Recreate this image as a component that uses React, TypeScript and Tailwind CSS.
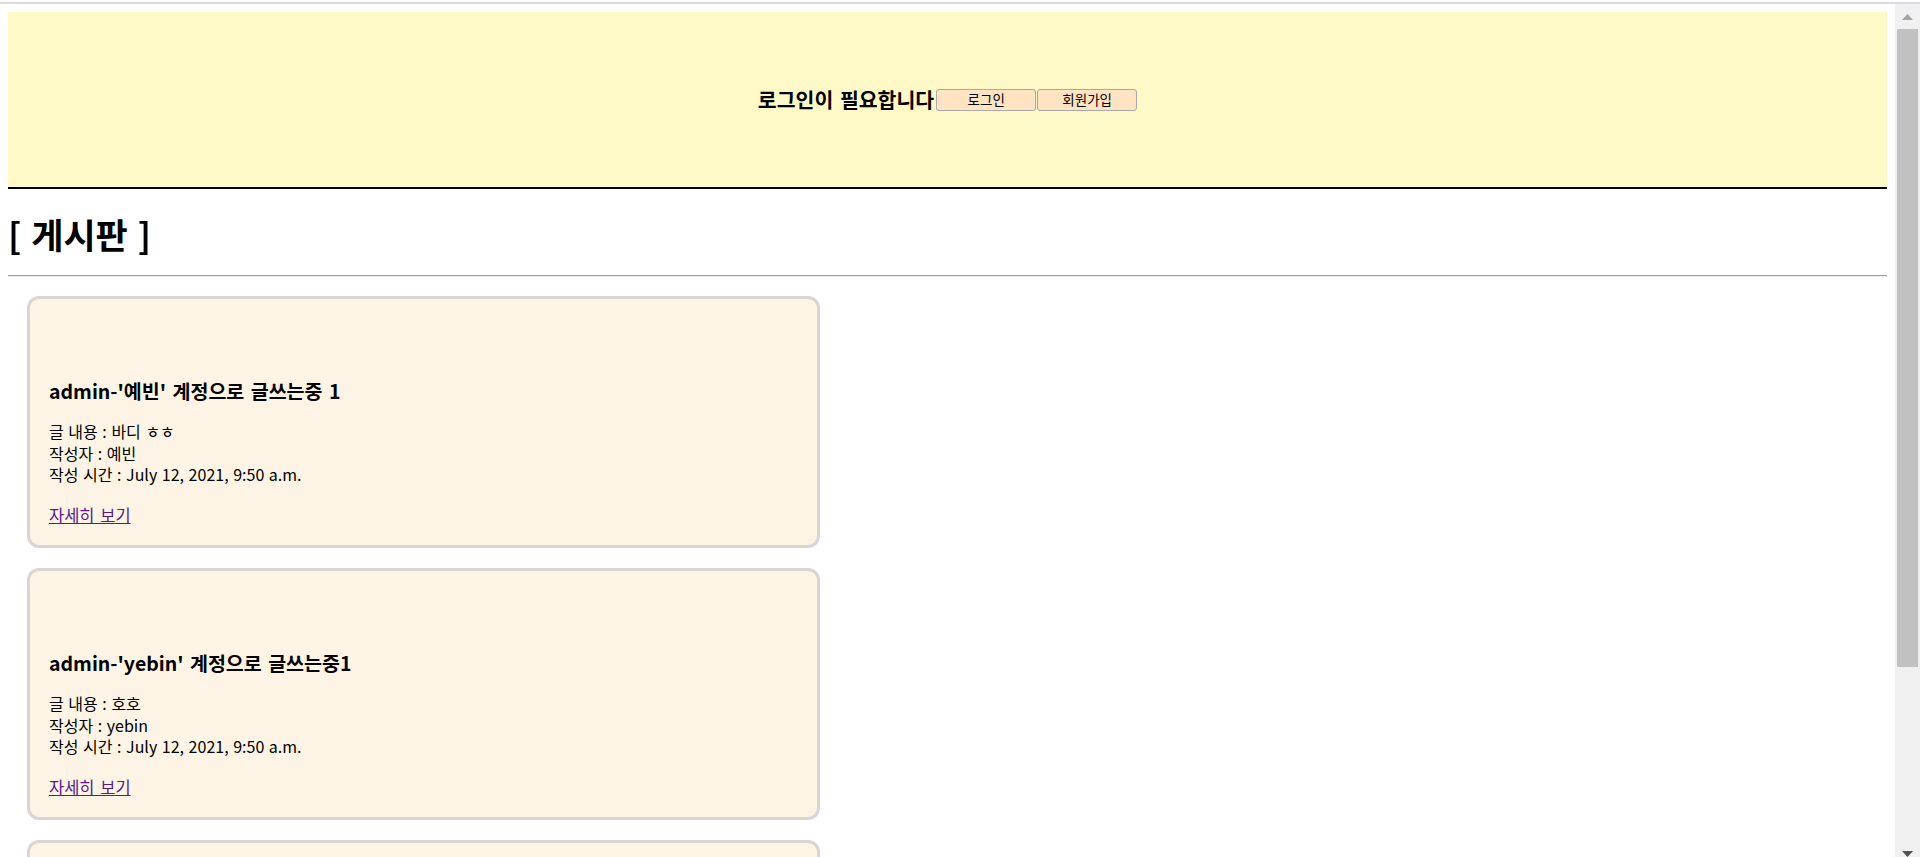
import React from 'react';

type Post = {
  title: string;
  body: string;
  author: string;
  createdAt: string;
};

const posts: Post[] = [
  {
    title: "admin-'예빈' 계정으로 글쓰는중 1",
    body: '바디 ㅎㅎ',
    author: '예빈',
    createdAt: 'July 12, 2021, 9:50 a.m.',
  },
  {
    title: "admin-'yebin' 계정으로 글쓰는중1",
    body: '호호',
    author: 'yebin',
    createdAt: 'July 12, 2021, 9:50 a.m.',
  },
  {
    title: "admin-'예빈' 계정으로 글쓰는중",
    body: '테스트',
    author: '예빈',
    createdAt: 'July 12, 2021, 9:49 a.m.',
  },
];

function PostCard({ post }: { post: Post }) {
  return (
    <div className="w-[793px] shrink-0 rounded-[12px] border-[3px] border-[#d6d6d6] bg-[#fdf4e5] px-[19px] pt-[80px] pb-[19px]">
      <h3 className="text-[19.5px] font-bold leading-[24px] text-black [word-spacing:2px]">{post.title}</h3>
      <div className="mt-[18px] text-[16px] leading-[21.5px] text-black [word-spacing:1px]">
        <p>글 내용 : {post.body}</p>
        <p>작성자 : {post.author}</p>
        <p>작성 시간 : {post.createdAt}</p>
      </div>
      <a href="#" className="mt-[19.5px] block w-fit text-[16.5px] leading-[21px] text-[#551a8b] underline [word-spacing:2px]">
        자세히 보기
      </a>
    </div>
  );
}

function Scrollbar() {
  return (
    <div className="flex w-[25px] shrink-0 flex-col items-center bg-[#f0f0f0]">
      <div className="flex h-[25px] w-full items-center justify-center">
        <svg width="11" height="6" viewBox="0 0 11 6">
          <polygon points="5.5,0 11,6 0,6" fill="#a3a3a3" />
        </svg>
      </div>
      <div className="h-[638px] w-[21px] bg-[#c1c1c1]" />
      <div className="flex-1" />
      <div className="flex h-[10px] w-full items-end justify-center">
        <svg width="11" height="6" viewBox="0 0 11 6">
          <polygon points="0,0 11,0 5.5,6" fill="#505050" />
        </svg>
      </div>
    </div>
  );
}

export default function App() {
  return (
    <div
      className="flex h-[857px] w-[1920px] flex-col overflow-hidden bg-white text-black"
      style={{ fontFamily: '"Noto Sans CJK KR", "Noto Sans", sans-serif' }}
    >
      <div className="h-[2px] shrink-0 bg-white" />
      <div className="h-[2px] shrink-0 bg-[#dcdae0]" />
      <div className="flex min-h-0 flex-1">
        <div className="min-w-0 flex-1 overflow-hidden px-[8px] pt-[8px]">
          <header className="flex h-[177px] items-center justify-center border-b-2 border-black bg-[#fff9c8]">
            <span className="text-[20.5px] font-bold leading-none [word-spacing:2px]">로그인이 필요합니다</span>
            <button className="ml-[2px] h-[22px] w-[100px] rounded-[3px] border border-[#a9a9a9] bg-[#ffe4c4] text-[13.5px] leading-none">
              로그인
            </button>
            <button className="ml-[1px] h-[22px] w-[100px] rounded-[3px] border border-[#a9a9a9] bg-[#ffe4c4] text-[13.5px] leading-none">
              회원가입
            </button>
          </header>

          <h1 className="mt-[25px] h-[40px] text-[35px] font-bold leading-[40px] [word-spacing:2px]">[ 게시판 ]</h1>
          <hr className="mt-[21px] border-t border-b border-t-[#9e9e9e] border-b-[#eeeeee]" />

          <div className="flex flex-col gap-[20px] pl-[19px] pt-[19px]">
            {posts.map((post, i) => (
              <PostCard key={i} post={post} />
            ))}
          </div>
        </div>
        <Scrollbar />
      </div>
    </div>
  );
}
